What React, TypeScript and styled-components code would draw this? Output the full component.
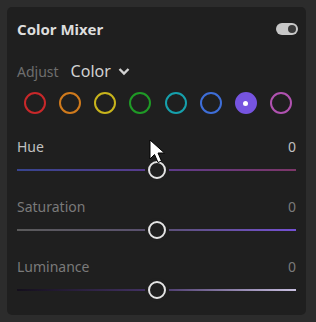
import React from 'react';
import styled, { createGlobalStyle } from 'styled-components';

const GlobalStyle = createGlobalStyle`
  html, body {
    margin: 0;
    padding: 0;
    background: #2c2c2c;
  }
  body {
    font-family: "Noto Sans", "Open Sans", sans-serif;
  }
`;

const Page = styled.div`
  width: 316px;
  height: 322px;
  padding: 7px 10px 7px 7px;
  box-sizing: border-box;
  position: relative;
`;

const Card = styled.div`
  background: #1f1f1f;
  border-radius: 5px;
  height: 100%;
  box-sizing: border-box;
  padding: 11px 8px 0 10px;
  display: flex;
  flex-direction: column;
`;

const Header = styled.div`
  display: flex;
  align-items: center;
  justify-content: space-between;
  height: 22px;
`;

const Title = styled.h2`
  margin: 0;
  font-size: 15px;
  font-weight: 700;
  color: #dcdcdc;
`;

const Toggle = styled.div`
  width: 22px;
  height: 12px;
  border-radius: 6px;
  background: #c8c8c8;
  position: relative;
  &::after {
    content: "";
    position: absolute;
    right: 2px;
    top: 2px;
    width: 8px;
    height: 8px;
    border-radius: 50%;
    background: #3a3a3a;
  }
`;

const AdjustRow = styled.div`
  display: flex;
  align-items: center;
  margin-top: 20px;
  height: 22px;
`;

const AdjustLabel = styled.span`
  font-size: 14px;
  color: #6e6e6e;
`;

const AdjustValue = styled.span`
  font-size: 16px;
  color: #d2d2d2;
  margin-left: 12px;
  display: flex;
  align-items: center;
  gap: 7px;
`;

const Swatches = styled.div`
  display: flex;
  justify-content: space-between;
  padding: 0 6px 0 7px;
  margin-top: 10px;
`;

const Swatch = styled.div<{ $c: string; $active?: boolean }>`
  width: 22px;
  height: 22px;
  border-radius: 50%;
  box-sizing: border-box;
  border: 2px solid ${(p) => p.$c};
  background: ${(p) => (p.$active ? p.$c : 'transparent')};
  display: flex;
  align-items: center;
  justify-content: center;
  &::after {
    content: "";
    display: ${(p) => (p.$active ? 'block' : 'none')};
    width: 5px;
    height: 5px;
    border-radius: 50%;
    background: #fff;
  }
`;

const SliderBlock = styled.div<{ $top: number }>`
  margin-top: ${(p) => p.$top}px;
  padding-right: 2px;
`;

const LabelRow = styled.div`
  display: flex;
  justify-content: space-between;
  font-size: 14px;
  color: #7a7a7a;
  height: 18px;
  align-items: center;
`;

const HueLabel = styled(LabelRow)`
  color: #c0c0c0;
`;

const Track = styled.div<{ $bg: string }>`
  position: relative;
  height: 2px;
  margin-top: 14px;
  background: ${(p) => p.$bg};
`;

const Thumb = styled.div`
  position: absolute;
  left: 50%;
  top: 50%;
  width: 18px;
  height: 18px;
  margin: -9px 0 0 -9px;
  border-radius: 50%;
  border: 2px solid #e4e4e4;
  background: #1f1f1f;
  box-sizing: border-box;
  box-shadow: 0 0 0 3px #1f1f1f;
`;

const Cursor = styled.svg`
  position: absolute;
  left: 149px;
  top: 139px;
`;

const colors = ['#c8282a', '#d07a1c', '#c8b41c', '#1f9a26', '#16a0ac', '#3e6ed8', '#7654e0', '#b052b0'];

const sliders = [
  { name: 'Hue', bg: 'linear-gradient(90deg, #37448e, #5a3b8c 50%, #7d3668)', top: 23 },
  { name: 'Saturation', bg: 'linear-gradient(90deg, #5a5a5a, #5a5070 50%, #7450d4)', top: 26 },
  { name: 'Luminance', bg: 'linear-gradient(90deg, #140f1c, #463468 50%, #c9c0e0)', top: 26 },
];

export default function App() {
  return (
    <>
      <GlobalStyle />
      <Page>
        <Card>
          <Header>
            <Title>Color Mixer</Title>
            <Toggle />
          </Header>
          <AdjustRow>
            <AdjustLabel>Adjust</AdjustLabel>
            <AdjustValue>
              Color
              <svg width="12" height="9" viewBox="0 0 12 9">
                <path d="M1.5 2 L6 6.5 L10.5 2" fill="none" stroke="#d2d2d2" strokeWidth="2.4" />
              </svg>
            </AdjustValue>
          </AdjustRow>
          <Swatches>
            {colors.map((c, i) => (
              <Swatch key={c} $c={c} $active={i === 6} />
            ))}
          </Swatches>
          {sliders.map((s, i) => {
            const Lbl = i === 0 ? HueLabel : LabelRow;
            return (
              <SliderBlock key={s.name} $top={s.top}>
                <Lbl>
                  <span>{s.name}</span>
                  <span>0</span>
                </Lbl>
                <Track $bg={s.bg}>
                  <Thumb />
                </Track>
              </SliderBlock>
            );
          })}
        </Card>
        <Cursor width="20" height="27" viewBox="0 0 20 27">
          <path d="M1 1 L1 20 L5.5 15.5 L9 23.5 L12.5 22 L9 14 L15.5 14 Z" fill="#fff" stroke="#000" strokeWidth="1" />
        </Cursor>
      </Page>
    </>
  );
}
